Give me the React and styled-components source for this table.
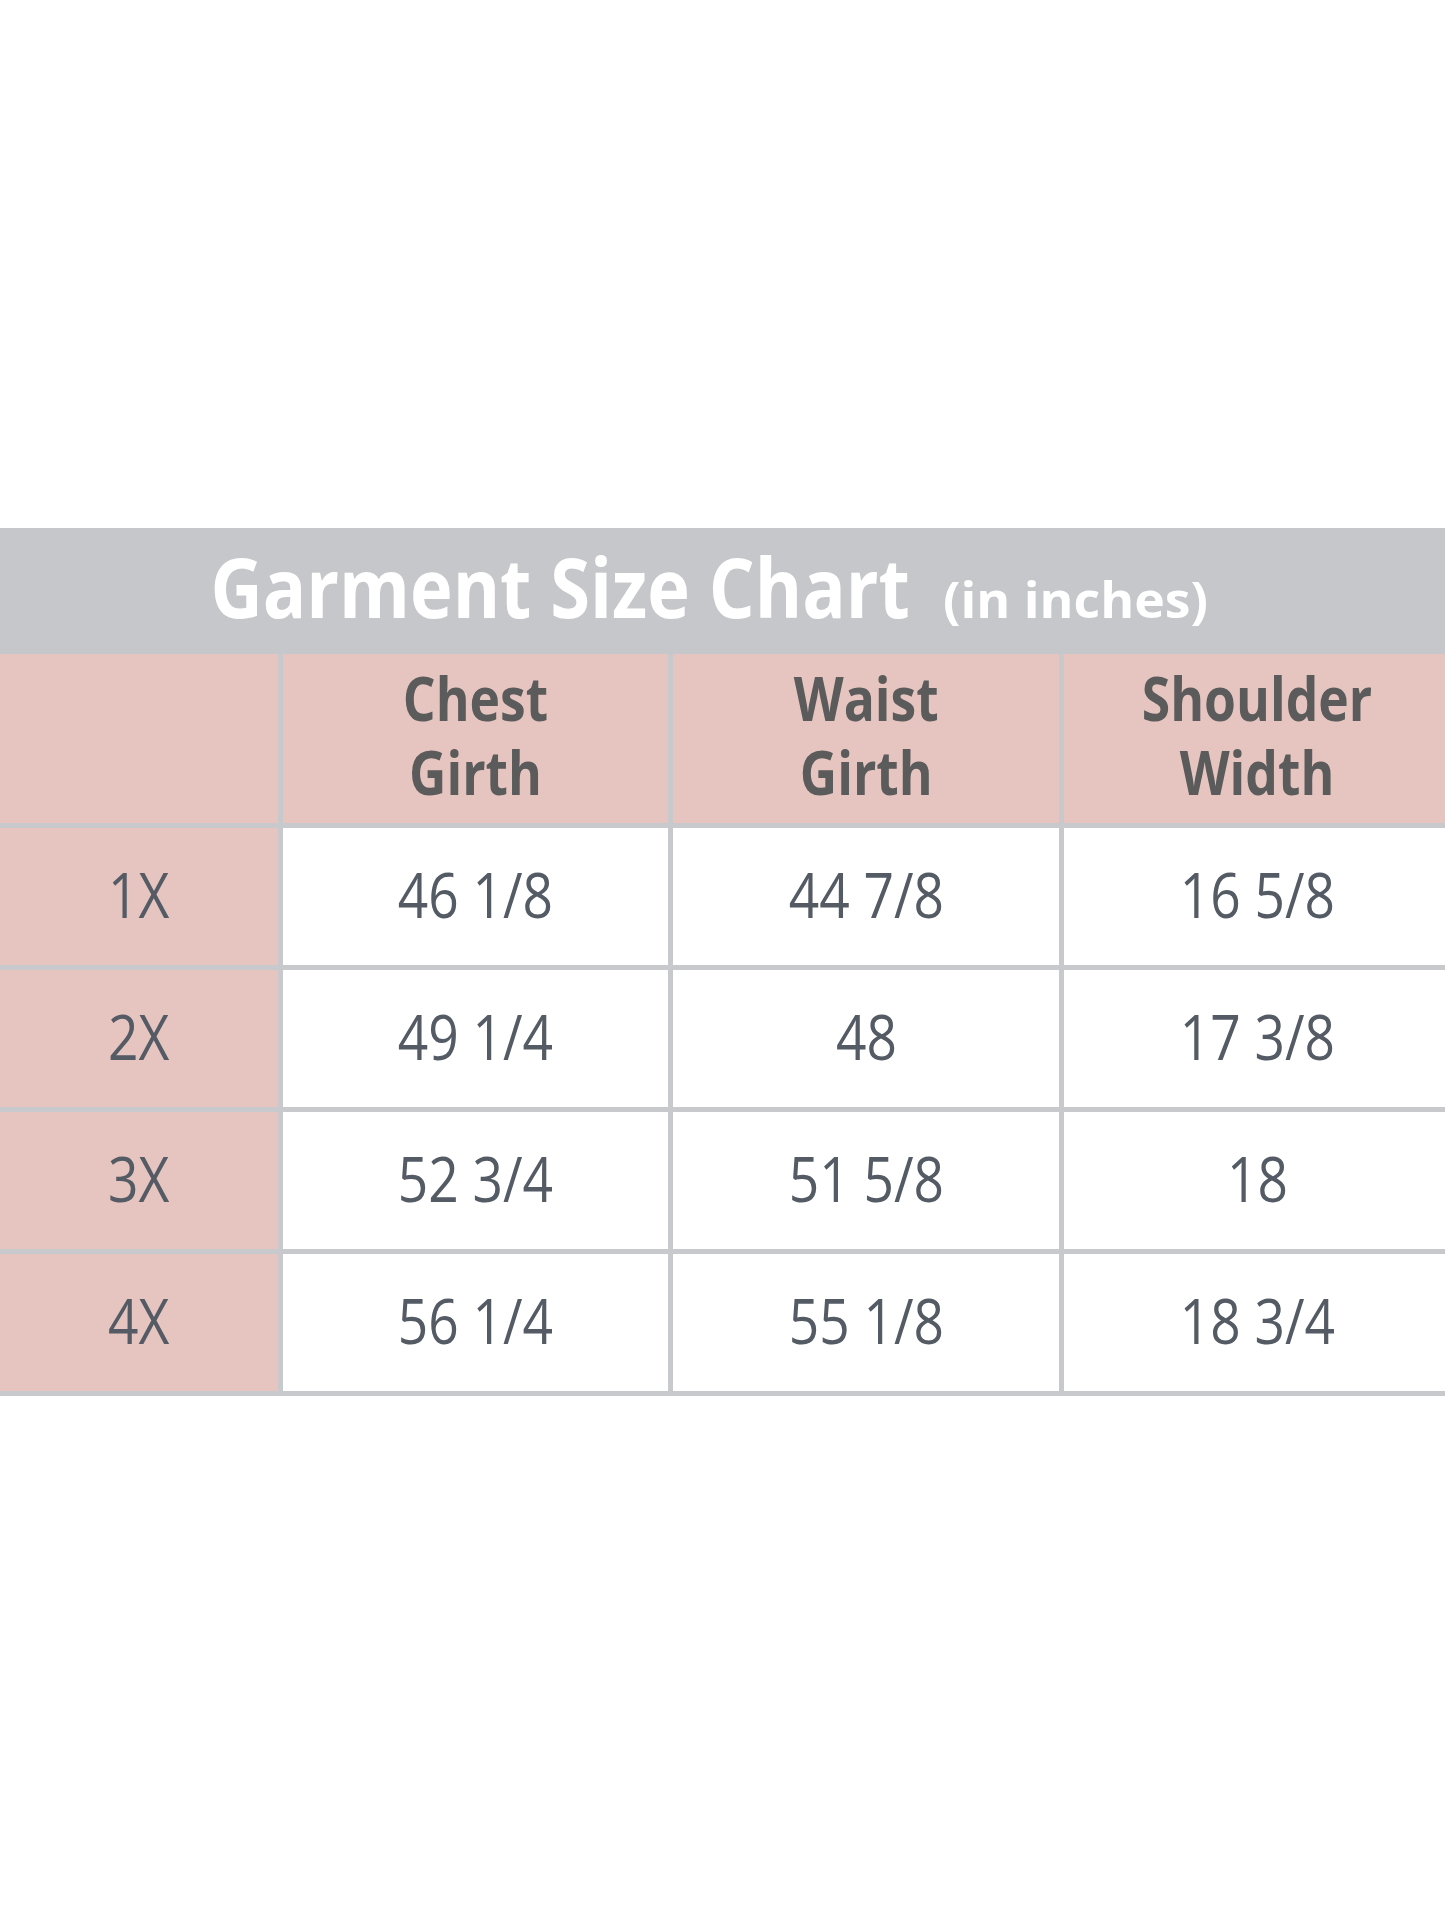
import React from "react";
import styled, { createGlobalStyle } from "styled-components";

const GlobalStyle = createGlobalStyle`
  html, body {
    margin: 0;
    padding: 0;
    background: #fff;
  }
  body {
    font-family: "Open Sans", "Noto Sans", sans-serif;
  }
`;

const Page = styled.div`
  width: 1445px;
  height: 1927px;
  padding-top: 528px;
  box-sizing: border-box;
  overflow: hidden;
  background: #fff;
`;

const Banner = styled.div`
  height: 126px;
  background: #c6c7cb;
  display: flex;
  justify-content: center;
  padding-right: 69px;
  box-sizing: border-box;
`;

// the source picture is squeezed sideways, so the text is too
const Title = styled.div`
  line-height: 116px;
  color: #fff;
  font-weight: 700;
  white-space: nowrap;
  transform: scaleX(0.87);
`;

const TitleMain = styled.span`
  font-size: 83px;
`;

const TitleSub = styled.span`
  display: inline-block;
  font-size: 50px;
  margin-left: 38px;
  transform: scaleX(1.19);
  transform-origin: left center;
`;

const Grid = styled.div`
  display: grid;
  grid-template-columns: 278px 385px 386px 386px;
  grid-template-rows: 169px repeat(4, 137px);
  gap: 5px;
  width: 1450px;
  padding-bottom: 5px;
  background: #c8c9cd;
`;

const Cell = styled.div`
  display: flex;
  align-items: center;
  justify-content: center;
  text-align: center;
  box-sizing: border-box;
  padding-bottom: ${(p) => (p.head ? "8px" : "5px")};
  background: ${(p) => (p.pink ? "#e6c5c0" : "#fff")};
`;

const HeadText = styled.span`
  display: inline-block;
  font-size: 60px;
  line-height: 74px;
  font-weight: 700;
  color: #5b5b5b;
  transform: scaleX(0.86);
`;

const ValueText = styled.span`
  display: inline-block;
  font-size: 62px;
  font-weight: 400;
  color: #545b64;
  white-space: nowrap;
  transform: scaleX(0.86);
`;

const columns = [
  ["Chest", "Girth"],
  ["Waist", "Girth"],
  ["Shoulder", "Width"],
];

const rows = [
  ["1X", "46 1/8", "44 7/8", "16 5/8"],
  ["2X", "49 1/4", "48", "17 3/8"],
  ["3X", "52 3/4", "51 5/8", "18"],
  ["4X", "56 1/4", "55 1/8", "18 3/4"],
];

export default function App() {
  return (
    <>
      <GlobalStyle />
      <Page>
        <Banner>
          <Title>
            <TitleMain>Garment Size Chart</TitleMain>
            <TitleSub>(in inches)</TitleSub>
          </Title>
        </Banner>
        <Grid>
          <Cell pink head />
          {columns.map(([a, b]) => (
            <Cell pink head key={a}>
              <HeadText>
                {a}
                <br />
                {b}
              </HeadText>
            </Cell>
          ))}
          {rows.map((row) =>
            row.map((v, i) => (
              <Cell pink={i === 0} key={row[0] + i}>
                <ValueText>{v}</ValueText>
              </Cell>
            ))
          )}
        </Grid>
      </Page>
    </>
  );
}
